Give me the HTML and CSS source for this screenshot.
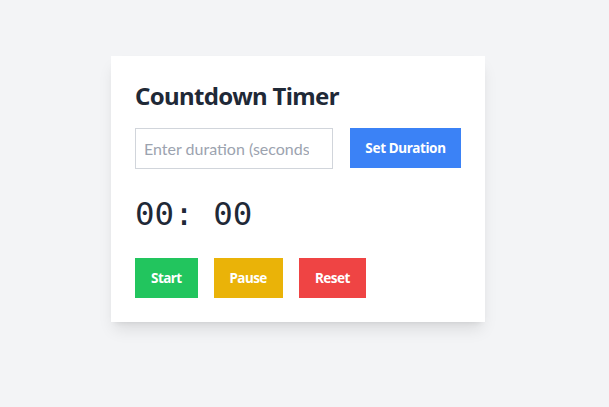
FILE: index.html
```html
<!DOCTYPE html>
<html lang="en">
<head>
<meta charset="utf-8">
<title>Countdown Timer</title>
<link rel="stylesheet" href="styles.css">
</head>
<body>
<main class="page">
  <section class="card">
    <h1 class="title">Countdown Timer</h1>
    <div class="setter">
      <input class="duration" type="text" placeholder="Enter duration (seconds)">
      <button class="btn btn-blue">Set Duration</button>
    </div>
    <div class="display">00: 00</div>
    <div class="controls">
      <button class="btn btn-green">Start</button>
      <button class="btn btn-yellow">Pause</button>
      <button class="btn btn-red">Reset</button>
    </div>
  </section>
</main>
</body>
</html>
```
FILE: styles.css
```css
html, body {
  margin: 0;
  padding: 0;
  background: #f3f4f6;
  font-family: "Noto Sans", sans-serif;
}
.page {
  display: flex;
  align-items: flex-start;
  padding: 56px 0 0 111px;
  min-height: 351px;
}
.card {
  background: #ffffff;
  padding: 24px;
  width: 326px;
  box-shadow: 0 10px 15px -3px rgba(0,0,0,0.1), 0 4px 6px -4px rgba(0,0,0,0.1);
}
.title {
  margin: 0 0 16px 0;
  font-size: 24px;
  line-height: 32px;
  font-weight: 700;
  letter-spacing: -0.65px;
  color: #1f2937;
}
.setter {
  display: flex;
  gap: 17px;
  align-items: flex-start;
}
.duration {
  box-sizing: border-box;
  width: 198px;
  height: 41px;
  border: 1px solid #d1d5db;
  padding: 0 23px 0 8px;
  font-family: "Lato", sans-serif;
  font-size: 16px;
  color: #1f2937;
  outline: none;
  margin: 0;
}
.duration::placeholder {
  color: #9ca3af;
}
.display {
  margin: 25px 0 24px 0;
  font-family: "DejaVu Sans Mono", monospace;
  font-size: 32.5px;
  line-height: 40px;
  color: #1f2937;
}
.controls {
  display: flex;
  gap: 16px;
}
.btn {
  border: none;
  margin: 0;
  height: 40px;
  padding: 0 16px;
  font-family: "Noto Sans", sans-serif;
  font-size: 13.5px;
  font-weight: 700;
  letter-spacing: -0.55px;
  color: #ffffff;
  cursor: pointer;
  white-space: nowrap;
}
.btn-blue { background: #3b82f6; width: 111px; padding: 0; letter-spacing: -0.35px; }
.btn-green { background: #22c55e; }
.btn-yellow { background: #eab308; }
.btn-red { background: #ef4444; }
```
